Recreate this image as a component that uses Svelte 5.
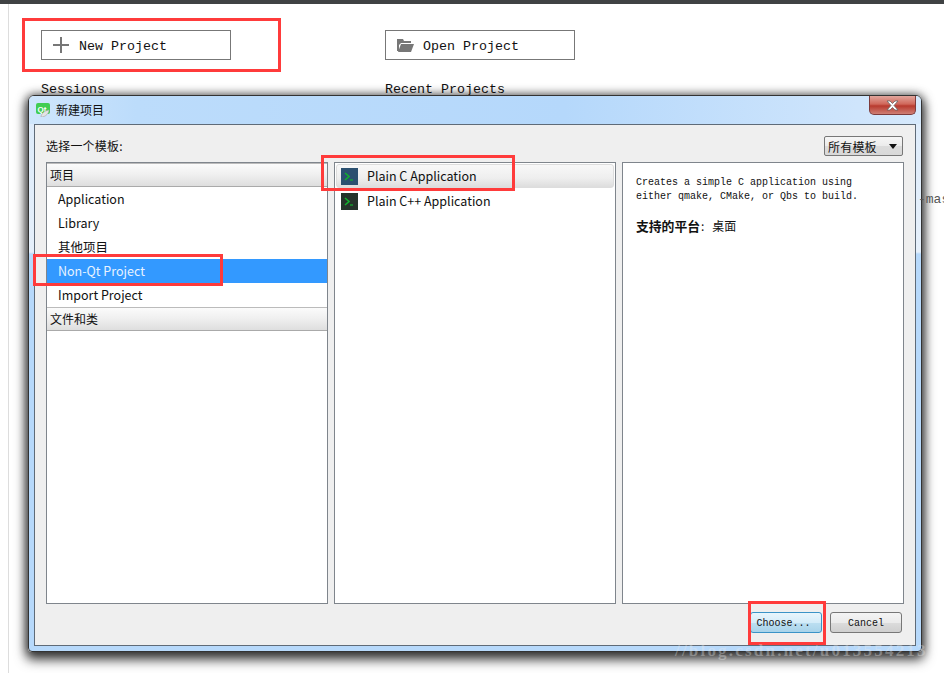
<script>
	const categories = [
		{ label: 'Application' },
		{ label: 'Library' },
		{ label: '其他项目' },
		{ label: 'Non-Qt Project', selected: true },
		{ label: 'Import Project' }
	];
	const templates = [
		{ label: 'Plain C Application', selected: true },
		{ label: 'Plain C++ Application' }
	];
</script>

<div class="page">
	<div class="topbar"></div>
	<div class="welcome">
		<div class="column">
			<button class="big">
				<svg width="18" height="18" viewBox="0 0 18 18"><path d="M8 1h2v7h7v2h-7v7H8v-7H1V8h7z" fill="#777" /></svg>
				<span>New Project</span>
			</button>
			<div class="heading">Sessions</div>
		</div>
		<div class="column">
			<button class="big">
				<svg width="18" height="18" viewBox="0 0 18 18"><path d="M1 3h6l1 2h7v2H5L3 9v6H1zM5 8h13l-3 8H2z" fill="#777" /></svg>
				<span>Open Project</span>
			</button>
			<div class="heading">Recent Projects</div>
		</div>
	</div>

	<div class="dialog">
		<div class="titlebar">
			<svg class="qt" width="15" height="15" viewBox="0 0 15 15">
				<rect x="0" y="1" width="14" height="11" rx="2" fill="#41cd52" />
				<text x="1.500" y="9.500" font-size="8" font-weight="700" font-family="Liberation Sans" fill="#fff">Qt</text>
				<path d="M5 15c0-3 3-6 8-7 0 3-3 7-8 7z" fill="#e4e4e4" stroke="#a5a5a5" stroke-width=".6" />
			</svg>
			<span class="title">新建项目</span>
			<div class="close">
				<svg width="15" height="11" viewBox="0 0 15 11"><path d="M2 1h3l2.500 2.500L10 1h3l-4 4.500L13 10h-3L7.500 7.500 5 10H2l4-4.500z" fill="#fff" stroke="#666" stroke-width=".8" /></svg>
			</div>
		</div>
		<div class="client">
			<div class="toolbar">
				<span>选择一个模板:</span>
				<div class="combo">
					<span>所有模板</span>
					<i class="arrow"></i>
				</div>
			</div>
			<div class="panes">
				<div class="pane">
					<div class="group">项目</div>
					{#each categories as item}
						<div class="category" class:selected={item.selected}>{item.label}</div>
					{/each}
					<div class="group">文件和类</div>
				</div>
				<div class="pane middle">
					{#each templates as item}
						<div class="template" class:selected={item.selected}>
							<div class="console">
								<svg width="17" height="17" viewBox="0 0 17 17"><path d="M4 5l4 3.500L4 12" fill="none" stroke="#12b12c" stroke-width="1.600" /><path d="M9 12h3" stroke="#12b12c" stroke-width="1.200" /></svg>
							</div>
							<span>{item.label}</span>
						</div>
					{/each}
				</div>
				<div class="pane description">
					<p class="mono">Creates a simple C application using<br />either qmake, CMake, or Qbs to build.</p>
					<p class="platform"><b>支持的平台</b><span class="colon">:</span>桌面</p>
				</div>
			</div>
			<div class="actions">
				<button class="push default">Choose...</button>
				<button class="push">Cancel</button>
			</div>
		</div>
	</div>

	<div class="peek">-mas</div>
	<div class="mark new-box"></div>
	<div class="mark plain-box"></div>
	<div class="mark nonqt-box"></div>
	<div class="mark choose-box"></div>
	<div class="watermark">//blog.csdn.net/u013554213</div>
</div>

<style>
	:global(body) {
		margin: 0;
		background: #fff;
	}

	.page {
		position: relative;
		width: 944px;
		height: 673px;
		overflow: hidden;
		background: #fff;
		font-family: "Noto Sans CJK SC", "Noto Sans", sans-serif;
		color: #111;
	}

	.topbar {
		height: 4px;
		background: #404244;
	}

	.welcome {
		display: flex;
		gap: 154px;
		height: 669px;
		margin-left: 8px;
		padding: 26px 0 0 32px;
		box-sizing: border-box;
		border-left: 1px solid #ddd;
		font-family: "Liberation Mono", monospace;
		font-size: 13.33px;
	}

	.column {
		width: 190px;
	}

	.big {
		display: flex;
		align-items: center;
		gap: 9px;
		width: 190px;
		height: 30px;
		padding: 2px 0 0 10px;
		box-sizing: border-box;
		border: 1px solid #777;
		background: #fff;
		color: #111;
		font: inherit;
	}

	.big svg {
		margin-top: -2px;
	}

	.heading {
		margin-top: 21px;
		line-height: 17px;
	}

	.peek {
		position: absolute;
		left: 918px;
		top: 192px;
		white-space: nowrap;
		font: 13px/15px "Liberation Mono", monospace;
		color: #555;
	}

	.dialog {
		position: absolute;
		left: 28px;
		top: 95px;
		width: 894px;
		height: 557px;
		display: flex;
		flex-direction: column;
		box-sizing: border-box;
		border: 1px solid #333;
		border-radius: 6px 6px 4px 4px;
		background: linear-gradient(180deg, #dcebfb 0, #e6f0fb 156px, #b7d9fb 158px);
		box-shadow: 0 0 10px 1px rgba(0, 0, 0, .5), 0 6px 12px 2px rgba(0, 0, 0, .7);
	}

	.titlebar {
		position: relative;
		display: flex;
		align-items: center;
		flex: none;
		height: 28px;
		padding: 0 0 2px 7px;
		box-sizing: border-box;
		background: linear-gradient(90deg, #cfe6fc 0, #bcdcfb 12%, #b5d8fb 60%, #cfe5fc 93%, #d6e9fc 100%);
		border-radius: 5px 5px 0 0;
	}

	.qt {
		margin-right: 5px;
	}

	.title {
		font-size: 12px;
		color: #111;
	}

	.close {
		position: absolute;
		top: 0;
		right: 5px;
		width: 47px;
		height: 19px;
		display: flex;
		align-items: center;
		justify-content: center;
		box-sizing: border-box;
		border: 1px solid #7d3b3b;
		border-top: 0;
		border-radius: 0 0 5px 5px;
		background: linear-gradient(180deg, #e2a69d 0, #d0675a 45%, #b83a2e 55%, #cf7f75 100%);
	}

	.client {
		flex: 1;
		display: flex;
		flex-direction: column;
		margin: 0 5px 5px;
		padding: 11px 12px 0 11px;
		box-sizing: border-box;
		border: 1px solid #5f6b78;
		background: #efefef;
	}

	.toolbar {
		display: flex;
		align-items: center;
		justify-content: space-between;
		height: 20px;
		font-size: 12px;
		letter-spacing: .2px;
	}

	.toolbar > span {
		margin-top: -2px;
	}

	.combo {
		display: flex;
		align-items: center;
		justify-content: space-between;
		width: 79px;
		height: 20px;
		padding: 0 5px 0 3px;
		box-sizing: border-box;
		border: 1px solid #777;
		border-radius: 2px;
		background: linear-gradient(180deg, #f6f6f6 0, #ebebeb 50%, #dcdcdc 51%, #d8d8d8 100%);
	}

	.arrow {
		width: 0;
		height: 0;
		border: 4px solid transparent;
		border-top: 5px solid #111;
		border-bottom: 0;
	}

	.panes {
		display: grid;
		grid-template-columns: repeat(3, 282px);
		gap: 6px;
		height: 442px;
		margin-top: 6px;
	}

	.pane {
		box-sizing: border-box;
		border: 1px solid #7f858c;
		background: #fff;
		font-size: 13px;
	}

	.group {
		height: 24px;
		line-height: 22px;
		padding-left: 3px;
		box-sizing: border-box;
		border-top: 1px solid #bbb;
		border-bottom: 1px solid #aaa;
		background: linear-gradient(180deg, #fbfbfb 0, #efefef 50%, #dedede 100%);
		font-size: 12px;
	}

	.category {
		height: 24px;
		line-height: 24px;
		padding-left: 11px;
		font-size: 12.5px;
	}

	.category.selected {
		background: #3399ff;
		color: #e8f3ff;
	}

	.middle {
		padding: 1px;
	}

	.template {
		display: flex;
		align-items: center;
		gap: 9px;
		height: 24px;
		padding-left: 5px;
		margin-bottom: 1px;
		box-sizing: border-box;
		font-size: 12.5px;
	}

	.template span {
		margin-top: -1px;
	}

	.template.selected {
		border: 1px solid #ddd;
		border-radius: 3px;
		padding-left: 4px;
		background: linear-gradient(180deg, #f8f8f8 0, #eeeeee 60%, #dddddd 100%);
	}

	.console {
		display: flex;
		width: 17px;
		height: 17px;
		background: #26332a;
	}

	.selected .console {
		background: #2b5070;
	}

	.description {
		padding: 13px 13px;
	}

	p {
		margin: 0;
	}

	.mono {
		font: 10px/14px "Liberation Mono", monospace;
	}

	.platform {
		margin-top: 14px;
		font-size: 12px;
		line-height: 16px;
	}

	.platform b {
		font-size: 12.8px;
	}

	.colon {
		margin: 0 8px 0 1px;
	}

	.actions {
		display: flex;
		justify-content: flex-end;
		gap: 8px;
		margin-top: 8px;
		padding-right: 1px;
	}

	.push {
		width: 72px;
		height: 21px;
		padding: 2px 0 0;
		box-sizing: border-box;
		border: 1px solid #777;
		border-radius: 3px;
		background: linear-gradient(180deg, #f4f4f4 0, #ebebeb 50%, #dcdcdc 51%, #cfcfcf 100%);
		color: #111;
		font: 10px "Liberation Mono", monospace;
	}

	.push.default {
		padding-right: 5px;
		border-color: #3a93c7;
		background: linear-gradient(180deg, #e8f5fc 0, #d4ecf9 50%, #bcdff1 51%, #a8d3ea 100%);
	}

	.mark {
		position: absolute;
		box-sizing: border-box;
		border: 3px solid #ff3b3b;
	}

	.new-box {
		left: 22px;
		top: 18px;
		width: 259px;
		height: 54px;
	}

	.plain-box {
		left: 321px;
		top: 155px;
		width: 194px;
		height: 36px;
	}

	.nonqt-box {
		left: 33px;
		top: 254px;
		width: 190px;
		height: 32px;
	}

	.choose-box {
		left: 748px;
		top: 601px;
		width: 78px;
		height: 44px;
	}

	.watermark {
		position: absolute;
		left: 675px;
		top: 641px;
		font: 700 17px "Liberation Serif", serif;
		letter-spacing: 2.200px;
		color: rgba(235, 235, 235, .35);
	}
</style>
